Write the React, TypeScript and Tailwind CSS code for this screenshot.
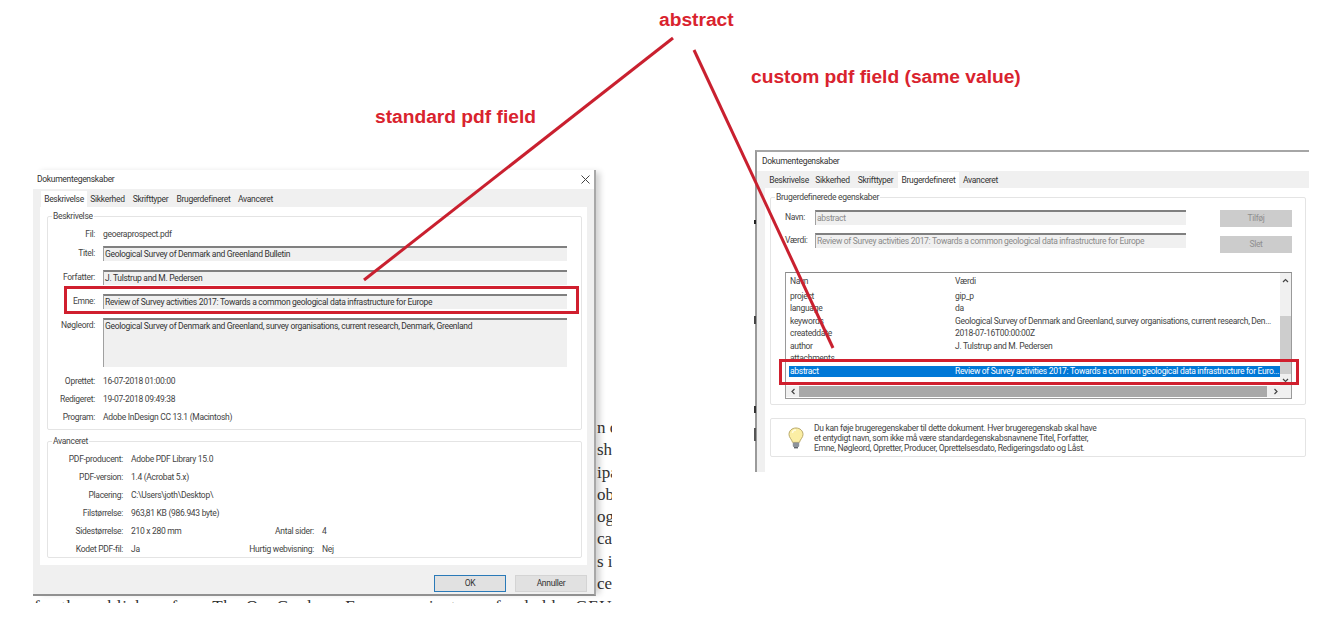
const ui = { fontFamily: 'Roboto, "Liberation Sans", sans-serif' };

function Group({ title, className, children }: { title: string; className: string; children: React.ReactNode }) {
  return (
    <div className={`relative border border-[#e4e4e4] rounded-[2px] ${className}`}>
      <span className="absolute -top-[7px] left-[4px] bg-white px-[1px] text-[8.5px] leading-[13px] text-[#444] whitespace-nowrap">{title}</span>
      {children}
    </div>
  );
}

function Tabs({ active }: { active: string }) {
  const tabs = [
    ["Beskrivelse", "w-[46px]"],
    ["Sikkerhed", "w-[41px]"],
    ["Skrifttyper", "w-[45px]"],
    ["Brugerdefineret", "w-[61px]"],
    ["Avanceret", "w-[43px]"],
  ];
  return (
    <div className="flex h-full items-end pl-[1px]">
      {tabs.map(([t, w]) => (
        <div
          key={t}
          className={`${w} flex items-center justify-center whitespace-nowrap text-[8.5px] text-[#333] ${t === active ? "h-[16px] bg-white" : "h-[15px]"}`}
        >
          {t}
        </div>
      ))}
    </div>
  );
}

function Field({ h = "h-[15px]", w = "w-[464px]", muted = false, children }: { h?: string; w?: string; muted?: boolean; children: React.ReactNode }) {
  return (
    <div className={`${h} ${w} shrink-0 bg-[#f0f0f0] border-t-2 border-l border-t-[#808080] border-l-[#a0a0a0] pl-[1px] text-[8.5px] leading-[12px] whitespace-nowrap overflow-hidden ${muted ? "text-[#8a8a8a]" : "text-[#333]"}`}>
      {children}
    </div>
  );
}

function LabelRow({ label, value, mt = "" }: { label: string; value: string; mt?: string }) {
  return (
    <div className={`flex h-[18px] items-center gap-[8px] text-[8.5px] text-[#444] ${mt}`}>
      <div className="w-[47px] text-right whitespace-nowrap flex justify-end">{label}</div>
      <div className="whitespace-nowrap">{value}</div>
    </div>
  );
}

function FieldRow({ label, mt, h, children }: { label: string; mt: string; h?: string; children: React.ReactNode }) {
  return (
    <div className={`flex items-start gap-[8px] ${mt}`}>
      <div className="w-[47px] flex justify-end whitespace-nowrap text-[8.5px] leading-[15px] text-[#444]">{label}</div>
      <Field h={h}>{children}</Field>
    </div>
  );
}

function AdvRow({ a, b, c, d }: { a: string; b: string; c?: string; d?: string }) {
  return (
    <div className="flex h-[18px] items-center text-[8.5px] text-[#444] whitespace-nowrap">
      <div className="w-[75px] flex justify-end">{a}</div>
      <div className="w-[120px] pl-[8px]">{b}</div>
      <div className="w-[71px] flex justify-end">{c}</div>
      <div className="pl-[8px]">{d}</div>
    </div>
  );
}

function LeftDialog() {
  return (
    <div style={ui} className="absolute left-[33px] top-[170px] w-[563px] h-[426px] flex flex-col bg-white border-b-2 border-r-2 border-b-[#909090] border-r-[#a8a8a8] shadow-[6px_0_6px_-2px_rgba(0,0,0,0.18)] tracking-[-0.3px]">
      <div className="h-[19px] shrink-0 flex items-center justify-between pl-[4px] pr-[4px] text-[8.5px] text-[#333]">
        <span>Dokumentegenskaber</span>
        <svg width="9" height="9" viewBox="0 0 9 9" className="mb-[1px]" stroke="#444" strokeWidth="1" fill="none">
          <path d="M0.5 0.5 L8.5 8.5 M8.5 0.5 L0.5 8.5" />
        </svg>
      </div>
      <div className="flex-1 bg-[#f0f0f0] pl-[7px] pr-[7px] flex flex-col">
        <div className="h-[18px] shrink-0">
          <Tabs active="Beskrivelse" />
        </div>
        <div className="h-[358px] shrink-0 bg-white pl-[7px] pr-[5px] pt-[9px] flex flex-col gap-[11px]">
          <Group title="Beskrivelse" className="h-[214px] pt-[8px]">
            <LabelRow label="Fil:" value="geoeraprospect.pdf" />
            <FieldRow label="Titel:" mt="mt-[3px]">Geological Survey of Denmark and Greenland Bulletin</FieldRow>
            <FieldRow label="Forfatter:" mt="mt-[9px]">J. Tulstrup and M. Pedersen</FieldRow>
            <FieldRow label="Emne:" mt="mt-[9px]">Review of Survey activities 2017: Towards a common geological data infrastructure for Europe</FieldRow>
            <FieldRow label="Nøgleord:" mt="mt-[9px]" h="h-[49px]">Geological Survey of Denmark and Greenland, survey organisations, current research, Denmark, Greenland</FieldRow>
            <LabelRow label="Oprettet:" value="16-07-2018 01:00:00" mt="mt-[5px]" />
            <LabelRow label="Redigeret:" value="19-07-2018 09:49:38" />
            <LabelRow label="Program:" value="Adobe InDesign CC 13.1 (Macintosh)" />
          </Group>
          <Group title="Avanceret" className="h-[117px] pt-[8px]">
            <AdvRow a="PDF-producent:" b="Adobe PDF Library 15.0" />
            <AdvRow a="PDF-version:" b="1.4 (Acrobat 5.x)" />
            <AdvRow a="Placering:" b="C:\Users\joth\Desktop\" />
            <AdvRow a="Filstørrelse:" b="963,81 KB (986.943 byte)" />
            <AdvRow a="Sidestørrelse:" b="210 x 280 mm" c="Antal sider:" d="4" />
            <AdvRow a="Kodet PDF-fil:" b="Ja" c="Hurtig webvisning:" d="Nej" />
          </Group>
        </div>
        <div className="flex justify-end gap-[9px] pt-[10px]">
          <div className="w-[72px] h-[17px] flex items-center justify-center bg-[#e1e1e1] border-[1.5px] border-[#2a7ab8] text-[8.5px] text-[#333]">OK</div>
          <div className="w-[72px] h-[17px] flex items-center justify-center bg-[#e1e1e1] border border-[#d4d4d4] text-[8.5px] text-[#333]">Annuller</div>
        </div>
      </div>
    </div>
  );
}

const listRows = [
  ["project", "gip_p"],
  ["language", "da"],
  ["keywords", "Geological Survey of Denmark and Greenland, survey organisations, current research, Den..."],
  ["createddate", "2018-07-16T00:00:00Z"],
  ["author", "J. Tulstrup and M. Pedersen"],
  ["attachments", ""],
];

function Bulb() {
  return (
    <svg width="16" height="22" viewBox="0 0 16 22" className="shrink-0">
      <path d="M8 1 C3.8 1 1 4 1 7.4 C1 10.6 3.6 12 4.6 15.4 L11.4 15.4 C12.4 12 15 10.6 15 7.4 C15 4 12.2 1 8 1 Z" fill="#fbeea4" stroke="#b9a96a" strokeWidth="1" />
      <path d="M4.4 6 C4.6 4 6 3 8 3" fill="none" stroke="#fffbe0" strokeWidth="1.4" />
      <rect x="4.8" y="15.6" width="6.4" height="4.4" rx="1" fill="#8d939b" />
      <rect x="6" y="20" width="4" height="1.4" fill="#5f656d" />
    </svg>
  );
}

function RightDialog() {
  return (
    <div style={ui} className="absolute left-[755px] top-[150px] w-[554px] h-[322px] flex flex-col bg-white border-t-2 border-l-2 border-t-[#a6a6a6] border-l-[#9a9a9a] overflow-hidden tracking-[-0.3px]">
      <div className="h-[19px] shrink-0 flex items-center justify-between pl-[5px] pb-[1px] text-[8.5px] text-[#333]">
        <span>Dokumentegenskaber</span>
        <span className="text-[10px] text-[#444] -mr-[6px]">×</span>
      </div>
      <div className="h-[17px] shrink-0 bg-[#f0f0f0] pl-[8px]">
        <Tabs active="Brugerdefineret" />
      </div>
      <div className="flex-1 min-w-0 flex">
        <div className="w-[8px] shrink-0 bg-[#f0f0f0]" />
        <div className="flex-1 min-w-0 pl-[5px] pr-[3px] pt-[9px] flex flex-col gap-[13px]">
          <Group title="Brugerdefinerede egenskaber" className="h-[208px] pt-[12px] pl-[14px] pr-[13px]">
            <div className="flex justify-between">
              <div className="flex flex-col gap-[8px]">
                <div className="flex">
                  <div className="w-[30px] text-[8.5px] leading-[15px] text-[#444]">Navn:</div>
                  <Field w="w-[371px]" muted>abstract</Field>
                </div>
                <div className="flex">
                  <div className="w-[30px] text-[8.5px] leading-[15px] text-[#444]">Værdi:</div>
                  <Field w="w-[371px]" muted>Review of Survey activities 2017: Towards a common geological data infrastructure for Europe</Field>
                </div>
              </div>
              <div className="flex flex-col gap-[9px]">
                <div className="w-[72px] h-[17px] bg-[#cccccc] flex items-center justify-center text-[8.5px] text-[#8f8f8f]">Tilføj</div>
                <div className="w-[72px] h-[17px] bg-[#cccccc] flex items-center justify-center text-[8.5px] text-[#8f8f8f]">Slet</div>
              </div>
            </div>
            <div className="relative mt-[19px] h-[127px] border border-[#9a9a9a] border-t-[#8a8a8a] overflow-hidden text-[8.5px] text-[#444]">
              <div className="flex h-[14px] mt-[1px] items-end pl-[4px]">
                <div className="w-[165px] shrink-0">Navn</div>
                <div>Værdi</div>
              </div>
              <div className="h-[2px]" />
              {listRows.map(([a, b]) => (
                <div key={a} className="flex h-[12.5px] items-center pl-[4px] whitespace-nowrap">
                  <div className="w-[165px] shrink-0">{a}</div>
                  <div>{b}</div>
                </div>
              ))}
              <div className="flex h-[11px] w-[491px] ml-[3px] mt-[1px] items-center pl-[1px] bg-[#0078d7] text-white whitespace-nowrap overflow-hidden">
                <div className="w-[165px] shrink-0">abstract</div>
                <div>Review of Survey activities 2017: Towards a common geological data infrastructure for Euro...</div>
              </div>
              <div className="absolute right-0 top-0 bottom-0 w-[11px] bg-[#f0f0f0] flex flex-col items-center">
                <svg width="7" height="5" viewBox="0 0 7 5" className="mt-[5px]" fill="none" stroke="#444" strokeWidth="1.2"><path d="M1 4 L3.5 1.5 L6 4" /></svg>
                <div className="mt-[33px] w-full h-[58px] bg-[#cdcdcd]" />
                <svg width="7" height="5" viewBox="0 0 7 5" className="mt-[4px]" fill="none" stroke="#444" strokeWidth="1.2"><path d="M1 1 L3.5 3.5 L6 1" /></svg>
              </div>
              <div className="absolute left-0 right-0 bottom-[1px] h-[11px] bg-[#f0f0f0] flex items-center">
                <svg width="7" height="7" viewBox="0 0 7 7" className="ml-[4px]" fill="none" stroke="#444" strokeWidth="1.2"><path d="M4.5 1 L2 3.5 L4.5 6" /></svg>
                <div className="ml-[2px] w-[468px] h-full bg-[#a9a9a9]" />
                <svg width="7" height="7" viewBox="0 0 7 7" className="ml-[5px]" fill="none" stroke="#444" strokeWidth="1.2"><path d="M2.5 1 L5 3.5 L2.5 6" /></svg>
              </div>
            </div>
          </Group>
          <div className="h-[39px] border border-[#e4e4e4] rounded-[2px] flex items-center pl-[17px] gap-[10px]">
            <Bulb />
            <div className="text-[8.5px] leading-[10px] text-[#444] whitespace-nowrap">
              <div>Du kan føje brugeregenskaber til dette dokument. Hver brugeregenskab skal have</div>
              <div>et entydigt navn, som ikke må være standardegenskabsnavnene Titel, Forfatter,</div>
              <div>Emne, Nøgleord, Opretter, Producer, Oprettelsesdato, Redigeringsdato og Låst.</div>
            </div>
          </div>
        </div>
      </div>
    </div>
  );
}

const pageFragments = ["n c", "shi", "ipa", "oba", "og", "cal", "s i", "ce"];

export default function App() {
  return (
    <div className="relative w-[1342px] h-[617px] overflow-hidden bg-white">
      <div style={{ fontFamily: '"Liberation Serif", serif' }} className="absolute left-[597px] top-[417px] w-[15px] overflow-hidden text-[17px] leading-[22.3px] text-[#333] whitespace-nowrap">
        {pageFragments.map((f) => (
          <div key={f}>{f}</div>
        ))}
      </div>
      <div style={{ fontFamily: '"Liberation Serif", serif' }} className="absolute left-[34px] top-[596px] w-[578px] h-[7px] overflow-hidden text-[17px] leading-[22px] tracking-[0.75px] text-[#333] whitespace-nowrap">
        for the publishers form The OneGeology Europe project was funded by GEU
      </div>
      <LeftDialog />
      <RightDialog />
      <div className="absolute left-[754px] top-[220px] w-[2px] h-[4px] bg-[#222]" />
      <div className="absolute left-[754px] top-[316px] w-[2px] h-[8px] bg-[#444]" />
      <div className="absolute left-[754px] top-[406px] w-[2px] h-[7px] bg-[#333]" />
      <div className="absolute left-[754px] top-[428px] w-[2px] h-[13px] bg-[#555]" />
      <div style={{ fontFamily: '"Liberation Sans", sans-serif' }} className="font-bold text-[#d9232e] text-[19.2px] leading-[22px] whitespace-nowrap">
        <div className="absolute left-[659px] top-[9px]">abstract</div>
        <div className="absolute left-[751px] top-[66px]">custom pdf field (same value)</div>
        <div className="absolute left-[375px] top-[106px]">standard pdf field</div>
      </div>
      <div className="absolute left-[64px] top-[286px] w-[515px] h-[28px] border-[3px] border-[#d01f2e]" />
      <div className="absolute left-[779px] top-[359px] w-[520px] h-[26px] border-[3px] border-[#d01f2e]" />
      <svg width="1342" height="617" className="absolute left-0 top-0 pointer-events-none" fill="none" stroke="#c9202f" strokeWidth="3">
        <path d="M673 38 L364 280" />
        <path d="M694 50 L833 348" />
      </svg>
    </div>
  );
}
